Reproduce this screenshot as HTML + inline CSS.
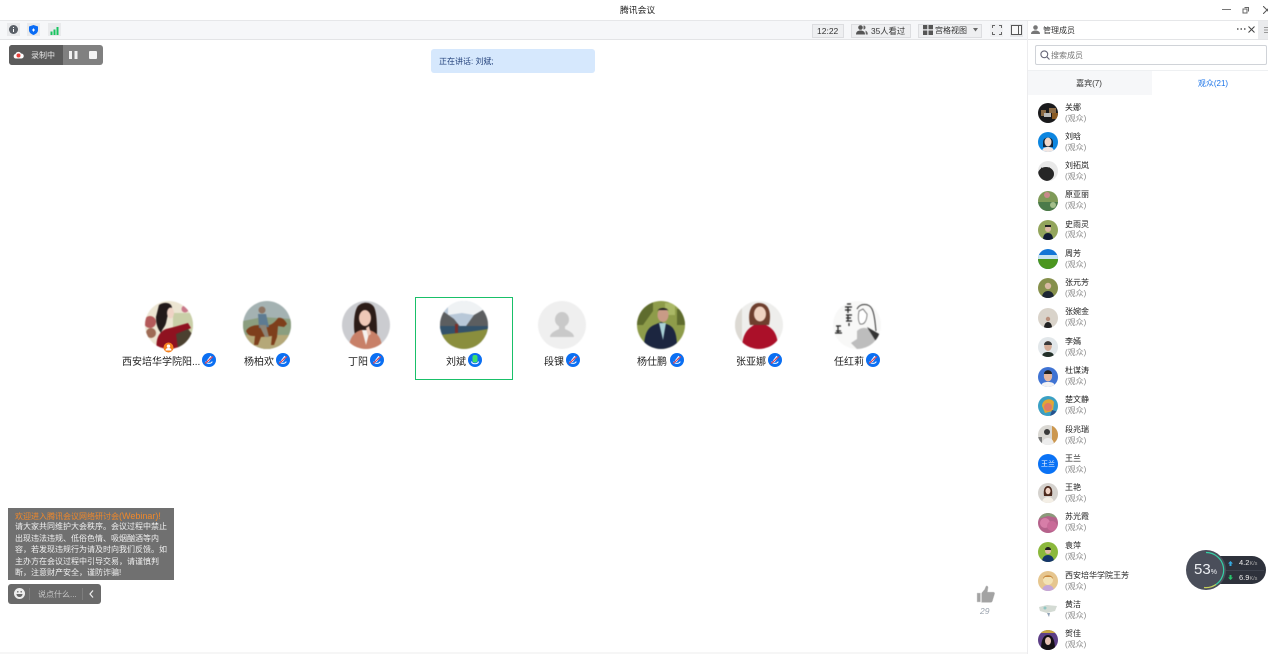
<!DOCTYPE html>
<html lang="zh"><head><meta charset="utf-8"><title>腾讯会议</title>
<style>
html,body{margin:0;padding:0;background:#fff}
#p{position:relative;width:1268px;height:654px;overflow:hidden;background:#fff;font-family:"Liberation Sans","Noto Sans CJK SC",sans-serif;color:#222;filter:blur(.25px)}
#p div,#p svg{position:absolute}
.t{white-space:nowrap;line-height:12px}
.n{font-size:10px;top:357px;color:#222}
.m{width:14px;height:14px;top:353px}
.v{width:48px;height:48px;top:301px;border-radius:50%;filter:blur(.4px)}
.s{width:20px;height:20px;left:1038px;border-radius:50%;filter:blur(.3px)}
.l{left:1065px;font-size:8px;color:#222;white-space:nowrap;line-height:10px;margin-top:.7px}
.r{left:1065px;font-size:8px;color:#888;white-space:nowrap;line-height:10px;margin-top:.7px}
.b{background:#eeeff1;border:1px solid #dcdde0;box-sizing:border-box;height:14px;top:24px}
.c{font-size:8px;color:#f0f0f0;left:15px}
</style></head><body><div id="p">

<div class="t" style="left:620px;top:4px;font-size:8.8px;color:#222">腾讯会议</div>
<div style="left:1222px;top:9px;width:9px;height:1px;background:#777"></div>
<svg style="left:1242px;top:6px" width="8" height="8" viewBox="0 0 8 8"><path d="M2.500 1.500h4v4M1 3h4v4H1z" fill="none" stroke="#666"/></svg>
<svg style="left:1263px;top:6px" width="5" height="8" viewBox="0 0 5 8"><path d="M0 0l8 8M8 0L0 8" stroke="#555" fill="none"/></svg>

<div style="left:0;top:20px;width:1268px;height:20px;background:#f6f7f9;border-top:1px solid #e6e7e9;border-bottom:1px solid #e3e4e6;box-sizing:border-box"></div>
<div style="left:7px;top:23px;width:13px;height:13px;background:#e9eaec"></div>
<svg style="left:9px;top:25px" width="9" height="9" viewBox="0 0 9 9"><circle cx="4.500" cy="4.500" r="4.500" fill="#5a6068"/><path d="M4.500 2v1M4.500 4v3" stroke="#fff"/></svg>
<div style="left:27px;top:23px;width:13px;height:13px;background:#e9eaec"></div>
<svg style="left:29px;top:25px" width="9" height="10" viewBox="0 0 9 10"><path d="M4.500 0L9 1.500V5c0 2.500-2 4-4.500 5C2 9 0 7.500 0 5V1.500z" fill="#0a6cf5"/><path d="M3 5h3M4.500 3.500v3" stroke="#fff"/></svg>
<div style="left:48px;top:23px;width:13px;height:13px;background:#e9eaec"></div>
<svg style="left:50px;top:26px" width="9" height="9" viewBox="0 0 9 9"><path d="M.5 5.500h2V9h-2zM3.500 3.500h2V9h-2zM6.500 1h2v8h-2z" fill="#17c45f"/></svg>

<div class="b" style="left:812px;width:32px"></div>
<div class="t" style="left:817px;top:24.500px;font-size:8.500px;color:#333">12:22</div>
<div class="b" style="left:851px;width:60px"></div>
<svg style="left:856px;top:25px" width="12" height="10" viewBox="0 0 12 10"><circle cx="4.500" cy="2.500" r="2.300" fill="#555"/><path d="M0 9.500c0-3 2-4 4.500-4S9 6.500 9 9.500z" fill="#555"/><path d="M7.500.5a2 2 0 010 4M9.500 5.500c1 .5 2.300 1.500 2.300 4h-2z" fill="#666"/></svg>
<div class="t" style="left:871px;top:24.500px;font-size:8.300px;color:#333">35人看过</div>
<div class="b" style="left:918px;width:64px"></div>
<svg style="left:923px;top:25px" width="10" height="10" viewBox="0 0 10 10"><path d="M0 0h4.300v4.300H0zM5.500 0H10v4.300H5.500zM0 5.500h4.300V10H0zM5.500 5.500H10V10H5.500z" fill="#555"/></svg>
<div class="t" style="left:935px;top:24.500px;font-size:8px;color:#333">宫格视图</div>
<svg style="left:973px;top:28px" width="5" height="4" viewBox="0 0 5 4"><path d="M0 0h5L2.500 3.500z" fill="#666"/></svg>
<div style="left:990px;top:24px;width:13px;height:13px;background:#eff0f2"></div>
<svg style="left:992px;top:25px" width="10" height="10" viewBox="0 0 10 10"><path d="M.5 3V.5H3M7 .5h2.500V3M9.500 7v2.500H7M3 9.500H.5V7" fill="none" stroke="#666"/></svg>
<div style="left:1010px;top:24px;width:13px;height:13px;background:#e6e7e9"></div>
<svg style="left:1011px;top:25px" width="11" height="10" viewBox="0 0 11 10"><rect x=".5" y=".5" width="10" height="9" fill="#f8f8f8" stroke="#555"/><path d="M7.500 1v8" stroke="#555"/></svg>

<div style="left:1027px;top:21px;width:241px;height:18px;background:#fff"></div>
<div style="left:1027px;top:21px;width:1px;height:633px;background:#ececee"></div>
<svg style="left:1031px;top:25px" width="9" height="9" viewBox="0 0 9 9"><circle cx="4.500" cy="2.500" r="2.300" fill="#777"/><path d="M0 9c0-2.500 2-3.500 4.500-3.500S9 6.500 9 9z" fill="#777"/></svg>
<div class="t" style="left:1043px;top:24.500px;font-size:8px;color:#333">管理成员</div>
<svg style="left:1237px;top:28px" width="9" height="3" viewBox="0 0 9 3"><path d="M0 .3h1.500v1.500H0zM3.500 .3H5v1.500H3.500zM7 .3h1.500v1.500H7z" fill="#555"/></svg>
<svg style="left:1248px;top:26px" width="7" height="7" viewBox="0 0 7 7"><path d="M.5.500l6 6M6.500.500l-6 6" stroke="#444" fill="none"/></svg>
<div style="left:1258px;top:21px;width:10px;height:18px;background:#eaebed"></div>
<svg style="left:1264px;top:27px" width="4" height="6" viewBox="0 0 4 6"><path d="M0 .5h4M0 3h4M0 5.500h4" stroke="#999"/></svg>

<div style="left:1035px;top:45px;width:232px;height:20px;border:1px solid #d0d3d8;border-radius:2px;box-sizing:border-box;background:#fff"></div>
<svg style="left:1040px;top:50px" width="10" height="10" viewBox="0 0 10 10"><circle cx="4.300" cy="4.300" r="3.400" fill="none" stroke="#667" stroke-width="1.100"/><path d="M7 7l2.500 2.500" stroke="#667" stroke-width="1.100"/></svg>
<div class="t" style="left:1051px;top:50px;font-size:8px;color:#777">搜索成员</div>
<div style="left:1028px;top:70px;width:240px;height:1px;background:#eef0f2"></div>
<div style="left:1028px;top:71px;width:124px;height:24px;background:#f6f7f9"></div>
<div class="t" style="left:1028px;width:122px;text-align:center;top:77.500px;font-size:8px;color:#333">嘉宾(7)</div>
<div class="t" style="left:1152px;width:122px;text-align:center;top:77.500px;font-size:8px;color:#1a73e8">观众(21)</div>

<!-- recording -->
<div style="left:9px;top:45px;width:94px;height:20px;background:#808080;border-radius:3px"></div>
<div style="left:9px;top:45px;width:54px;height:20px;background:#5b5b5b;border-radius:3px 0 0 3px"></div>
<svg style="left:13px;top:51px" width="11" height="8" viewBox="0 0 11 8"><path d="M2.500 7.500a2.300 2.300 0 010-4.500 3 3 0 015.500-.5 2.500 2.500 0 01.500 5z" fill="#fff"/><circle cx="5.500" cy="4.500" r="2" fill="#e9403c"/></svg>
<div class="t" style="left:31px;top:50px;font-size:8px;color:#e6e6e6">录制中</div>
<svg style="left:69px;top:51px" width="9" height="8" viewBox="0 0 9 8"><path d="M0 0h3v8H0zM5.500 0h3v8h-3z" fill="#f1f1f1"/></svg>
<div style="left:89px;top:51px;width:8px;height:8px;background:#f4f4f4;border-radius:1px"></div>

<!-- speaking -->
<div style="left:431px;top:49px;width:164px;height:24px;background:#d6e8fd;border-radius:3px"></div>
<div class="t" style="left:439px;top:56px;font-size:8px;color:#24427c">正在讲话: 刘斌;</div>

<!-- avatars -->
<svg class="v" style="left:145px" viewBox="0 0 48 48"><rect width="48" height="48" fill="#ece5d2"/><rect x="28" y="12" width="20" height="20" fill="#c9cfa8"/><circle cx="5" cy="21" r="6" fill="#b45a5a"/><circle cx="6" cy="32" r="5" fill="#9e6b55"/><circle cx="40" cy="8" r="3.500" fill="#c9788a"/><path d="M12 48c-2-10 3-18 9-20l8-2 14-4 3 5-12 6 1 15z" fill="#8f1220"/><path d="M14 4c6-4 13-2 13 3l-4 6-2 9c-1 4-4 6-5 10-3-4-5-8-5-16z" fill="#221a1a"/><ellipse cx="25.500" cy="12" rx="3.500" ry="5.500" fill="#efd3c5"/><path d="M31 33l12-5 5 6-4 14H33z" fill="#4b4030"/></svg>
<svg style="left:163px;top:342px" width="11" height="11" viewBox="0 0 11 11"><circle cx="5.500" cy="5.500" r="5" fill="#f5811f"/><circle cx="5.500" cy="4.200" r="1.700" fill="#fff"/><path d="M2.500 8.500c0-2 1.500-2.500 3-2.500s3 .5 3 2.500z" fill="#fff"/></svg>
<svg class="v" style="left:243px" viewBox="0 0 48 48"><rect width="48" height="48" fill="#a4b2b2"/><path d="M0 20l20-4 28 2v30H0z" fill="#8b9e7f"/><path d="M0 34h48v14H0z" fill="#b5a878"/><path d="M3 30c3-6 12-7 20-5 6-1 9-4 12-8 4-1 7 2 9 6l-3 3-6-1-1 11-3 8h-3l1-9-11 1-3 8H11l1-9c-4 0-7 0-9-5z" fill="#7e3f1c"/><path d="M15 13h8l3 13-10 1z" fill="#5d7b92"/><circle cx="19" cy="9" r="3.500" fill="#8d7463"/><path d="M16 24h7l3 12h-4z" fill="#8d8577"/></svg>
<svg class="v" style="left:342px" viewBox="0 0 48 48"><rect width="48" height="48" fill="#cbccd0"/><path d="M13 34c-2-9-1-24 3-29 5-5 13-4 16 1 3 6 3 20 3 28z" fill="#2c1c17"/><ellipse cx="23" cy="17" rx="6" ry="8" fill="#eec8b7"/><path d="M7 48c0-11 5-17 12-19l4 0 4 0c8 2 13 8 13 19z" fill="#c88068"/><path d="M20 29l4 15 4-15z" fill="#f5f1ee"/><path d="M24 27l3-2 2 8-3 2z" fill="#eec8b7"/></svg>
<div style="left:415px;top:297px;width:98px;height:83px;border:1px solid #19c069;box-sizing:border-box"></div>
<svg class="v" style="left:440px" viewBox="0 0 48 48"><rect width="48" height="48" fill="#b8c8d8"/><path d="M8 0h30l10 8-14 6-12-2-14 2z" fill="#eff2f4"/><path d="M0 8l14 10 8 10H0zM48 6L34 14l-10 14h24z" fill="#5c5e60"/><rect y="25" width="48" height="9" fill="#33526a"/><path d="M0 34c16-2 32-3 48-6v20H0z" fill="#8a8e3d"/><rect x="15" y="23" width="3" height="9" fill="#7a2f2a"/></svg>
<svg class="v" style="left:538px" viewBox="0 0 48 48"><rect width="48" height="48" fill="#efefef"/><ellipse cx="24" cy="18.500" rx="7" ry="7.500" fill="#c9c9c9"/><path d="M12 36c0-4 5-6 9-8v-3h6v3c4 2 9 4 9 8z" fill="#c9c9c9"/></svg>
<svg class="v" style="left:637px" viewBox="0 0 48 48"><rect width="48" height="48" fill="#8e9c4a"/><path d="M0 0h16v10L6 24H0zM40 8h8v16h-8z" fill="#5f6c2e"/><path d="M28 2h10v12H28z" fill="#aab866"/><path d="M7 48c0-14 3-21 10-24l7-3 8 3c6 3 8 10 8 24z" fill="#1c2640"/><path d="M22 22h7l-3 17z" fill="#a9d1d6"/><ellipse cx="26" cy="14" rx="5.500" ry="7" fill="#c99b86"/><path d="M20.500 10c1-4 10-4 11 0l-1-1h-9z" fill="#222"/></svg>
<svg class="v" style="left:735px" viewBox="0 0 48 48"><rect width="48" height="48" fill="#eeeeec"/><rect width="7" height="48" fill="#dcd9d3"/><path d="M15 24C12 10 17 2 24 2c9 0 13 8 10 22z" fill="#6f3f2e"/><ellipse cx="25" cy="13" rx="6" ry="7.500" fill="#efd2c0"/><path d="M7 48c0-14 5-20 12-24h12c8 4 12 10 12 24z" fill="#ab1029"/></svg>
<svg class="v" style="left:833px" viewBox="0 0 48 48"><rect width="48" height="48" fill="#f8f8f7"/><path d="M24 8c3-6 12-6 15 0 3 6 3 14 4 22" fill="none" stroke="#333"/><path d="M26 10c-1 5-1 10 1 13 4 1 7-3 7-10l-4-5z" fill="#fff" stroke="#555" stroke-width=".7"/><path d="M24 30c4-4 9-4 13-1l9 6 2 8-12 5H24l-6-6 6-4z" fill="#bdbdbd"/><path d="M34 26l14 8-4 8z" fill="#333"/><path d="M14 3h4M12 6h7M15 6v6M12 9h6M13 14h6M13 17h5M15 14v6M13 20h6M16 22v3M3 25h5M3 30h5M5 25v7M2 32h7" stroke="#222" stroke-width="1.200"/></svg>

<div class="t n" style="left:122px">西安培华学院阳...</div>
<div class="t n" style="left:244px">杨柏欢</div>
<div class="t n" style="left:348px">丁阳</div>
<div class="t n" style="left:446px">刘斌</div>
<div class="t n" style="left:544px">段锞</div>
<div class="t n" style="left:637px">杨仕鹏</div>
<div class="t n" style="left:736px">张亚娜</div>
<div class="t n" style="left:834px">任红莉</div>

<svg class="m" style="left:202px" viewBox="0 0 14 14"><circle cx="7" cy="7" r="7" fill="#0b6ff2"/><path d="M3.800 8.500c.7 2.500 5.700 2.500 6.400 0M5.500 7.500l3-4 1 1-3 4z" fill="none" stroke="#fff"/><path d="M3 10.500l8-7" stroke="#e83a4b" stroke-width="1.100"/></svg>
<svg class="m" style="left:276px" viewBox="0 0 14 14"><circle cx="7" cy="7" r="7" fill="#0b6ff2"/><path d="M3.800 8.500c.7 2.500 5.700 2.500 6.400 0M5.500 7.500l3-4 1 1-3 4z" fill="none" stroke="#fff"/><path d="M3 10.500l8-7" stroke="#e83a4b" stroke-width="1.100"/></svg>
<svg class="m" style="left:370px" viewBox="0 0 14 14"><circle cx="7" cy="7" r="7" fill="#0b6ff2"/><path d="M3.800 8.500c.7 2.500 5.700 2.500 6.400 0M5.500 7.500l3-4 1 1-3 4z" fill="none" stroke="#fff"/><path d="M3 10.500l8-7" stroke="#e83a4b" stroke-width="1.100"/></svg>
<svg class="m" style="left:468px" viewBox="0 0 14 14"><circle cx="7" cy="7" r="7" fill="#0b6ff2"/><rect x="4.500" y="2" width="5" height="7.500" rx="2" fill="#3fe06a"/><path d="M3.500 8.500c.5 3 6.500 3 7 0" fill="none" stroke="#fff"/></svg>
<svg class="m" style="left:566px" viewBox="0 0 14 14"><circle cx="7" cy="7" r="7" fill="#0b6ff2"/><path d="M3.800 8.500c.7 2.500 5.700 2.500 6.400 0M5.500 7.500l3-4 1 1-3 4z" fill="none" stroke="#fff"/><path d="M3 10.500l8-7" stroke="#e83a4b" stroke-width="1.100"/></svg>
<svg class="m" style="left:670px" viewBox="0 0 14 14"><circle cx="7" cy="7" r="7" fill="#0b6ff2"/><path d="M3.800 8.500c.7 2.500 5.700 2.500 6.400 0M5.500 7.500l3-4 1 1-3 4z" fill="none" stroke="#fff"/><path d="M3 10.500l8-7" stroke="#e83a4b" stroke-width="1.100"/></svg>
<svg class="m" style="left:768px" viewBox="0 0 14 14"><circle cx="7" cy="7" r="7" fill="#0b6ff2"/><path d="M3.800 8.500c.7 2.500 5.700 2.500 6.400 0M5.500 7.500l3-4 1 1-3 4z" fill="none" stroke="#fff"/><path d="M3 10.500l8-7" stroke="#e83a4b" stroke-width="1.100"/></svg>
<svg class="m" style="left:866px" viewBox="0 0 14 14"><circle cx="7" cy="7" r="7" fill="#0b6ff2"/><path d="M3.800 8.500c.7 2.500 5.700 2.500 6.400 0M5.500 7.500l3-4 1 1-3 4z" fill="none" stroke="#fff"/><path d="M3 10.500l8-7" stroke="#e83a4b" stroke-width="1.100"/></svg>

<!-- chat -->
<div style="left:8px;top:508px;width:166px;height:72px;background:#707070"></div>
<div class="t" style="left:15px;top:510px;font-size:8px;color:#f0882a">欢迎进入腾讯会议网络研讨会<span style="font-size:9px">(Webinar)!</span></div>
<div class="t c" style="top:521px">请大家共同维护大会秩序。会议过程中禁止</div>
<div class="t c" style="top:533px">出现违法违规、低俗色情、吸烟酗酒等内</div>
<div class="t c" style="top:544px">容，若发现违规行为请及时向我们反馈。如</div>
<div class="t c" style="top:556px">主办方在会议过程中引导交易，请谨慎判</div>
<div class="t c" style="top:567px">断，注意财产安全，谨防诈骗!</div>
<div style="left:8px;top:584px;width:93px;height:20px;background:#6a6a6a;border-radius:3px"></div>
<svg style="left:14px;top:588px" width="11" height="11" viewBox="0 0 11 11"><circle cx="5.500" cy="5.500" r="5.500" fill="#eee"/><path d="M2.500 6h6c0 2-1.500 3-3 3s-3-1-3-3z" fill="#6a6a6a"/><circle cx="3.800" cy="3.800" r=".8" fill="#6a6a6a"/><circle cx="7.200" cy="3.800" r=".8" fill="#6a6a6a"/></svg>
<div style="left:29px;top:588px;width:1px;height:12px;background:#7d7d7d"></div>
<div class="t" style="left:38px;top:589px;font-size:8px;color:#c8c8c8">说点什么...</div>
<div style="left:82px;top:588px;width:1px;height:12px;background:#7d7d7d"></div>
<svg style="left:89px;top:590px" width="5" height="8" viewBox="0 0 5 8"><path d="M4 .5L1 4l3 3.500" fill="none" stroke="#eee" stroke-width="1.200"/></svg>

<!-- like -->
<svg style="left:976px;top:585px" width="19" height="18" viewBox="0 0 19 18"><path d="M1 8h3.500v9H1zM5.500 8l3-3.500L10 1c1.500-.5 2.500.5 2 2.500L11.500 7H17c1.500 0 2 1 1.500 2.500l-2 6.500c-.3 1-1 1.500-2 1.500H5.500z" fill="#a3a3a3" stroke="#d8d8d8" stroke-width=".5"/></svg>
<div class="t" style="left:980px;top:605px;font-size:8.500px;font-style:italic;color:#9aa2ad">29</div>

<!-- members -->
<svg class="s" style="top:103px" viewBox="0 0 20 20"><rect width="20" height="20" fill="#1a1a1c"/><path d="M3 7h5v6H3zM11 5h7v5h-7z" fill="#8a6a45"/><rect x="6" y="10" width="7" height="4" fill="#bbb"/><rect x="14" y="10" width="6" height="6" fill="#8a5a22"/></svg>
<svg class="s" style="top:132px" viewBox="0 0 20 20"><rect width="20" height="20" fill="#0d86e0"/><path d="M5 10c0-6 10-6 10 0v5H5z" fill="#12243a"/><ellipse cx="10" cy="10" rx="3.500" ry="4.500" fill="#f1d7c9"/><path d="M4 20c0-4 3-5 6-5s6 1 6 5z" fill="#f2e7e3"/></svg>
<svg class="s" style="top:161px" viewBox="0 0 20 20"><rect width="20" height="20" fill="#e8e8e8"/><ellipse cx="8" cy="13" rx="8" ry="7" fill="#262626"/><path d="M3 6l2 3h5l2-3v6H3z" fill="#262626"/></svg>
<svg class="s" style="top:191px" viewBox="0 0 20 20"><rect width="20" height="20" fill="#7f9a58"/><circle cx="9" cy="4" r="3" fill="#c98a8a"/><rect y="11" width="20" height="9" fill="#4b7a4a"/><circle cx="15" cy="14" r="3" fill="#a4bf8b"/></svg>
<svg class="s" style="top:220px" viewBox="0 0 20 20"><rect width="20" height="20" fill="#93a55c"/><path d="M5 20c0-5 2-7 5-7s5 2 5 7z" fill="#111c33"/><circle cx="10" cy="9" r="3" fill="#dcb9a3"/><path d="M7 7h6V5H7z" fill="#222"/></svg>
<svg class="s" style="top:249px" viewBox="0 0 20 20"><rect width="20" height="20" fill="#1376d6"/><rect y="6" width="20" height="4" fill="#c8e4f2"/><rect y="10" width="20" height="10" fill="#4b961f"/></svg>
<svg class="s" style="top:278px" viewBox="0 0 20 20"><rect width="20" height="20" fill="#86904c"/><path d="M4 20c0-5 3-7 6-7s6 2 6 7z" fill="#1d2633"/><circle cx="10" cy="8" r="3.200" fill="#d9b9a2"/></svg>
<svg class="s" style="top:307.500px" viewBox="0 0 20 20"><rect width="20" height="20" fill="#d9d3ca"/><path d="M6 20c0-4 2-6 4-6s4 2 4 6z" fill="#222"/><circle cx="10" cy="11" r="2.200" fill="#b98f7b"/></svg>
<svg class="s" style="top:337px" viewBox="0 0 20 20"><rect width="20" height="20" fill="#e2e7ea"/><path d="M4 20c0-4 3-5 6-5s6 1 6 5z" fill="#233029"/><ellipse cx="10" cy="9" rx="3.800" ry="5" fill="#d5ac96"/><path d="M6 8c0-5 8-5 8 0z" fill="#3a3a3a"/></svg>
<svg class="s" style="top:366.500px" viewBox="0 0 20 20"><rect width="20" height="20" fill="#3f73d3"/><path d="M3 20c0-4 3-5 7-5s7 1 7 5z" fill="#f2f2f4"/><ellipse cx="10" cy="9" rx="4.200" ry="5.500" fill="#e4b8a0"/><path d="M6 7c0-5 8-5 8 0z" fill="#222"/></svg>
<svg class="s" style="top:395.500px" viewBox="0 0 20 20"><rect width="20" height="20" fill="#3aa0c4"/><path d="M4 10C4 3 13 1 16 6l-1 9-8 2z" fill="#e0a636"/><circle cx="10" cy="11" r="4" fill="#df7a66"/><path d="M1 15l6 5H0zM14 14l6 2v4h-8z" fill="#27538f"/></svg>
<svg class="s" style="top:425px" viewBox="0 0 20 20"><rect width="20" height="20" fill="#dad8d3"/><rect x="14" width="6" height="20" fill="#cc974e"/><path d="M4 20c0-5 3-7 6-7s6 2 6 7z" fill="#ededed"/><circle cx="9" cy="7" r="3" fill="#3a3a3a"/><rect y="12" width="4" height="8" fill="#777"/></svg>
<div class="s" style="top:454px;background:#0a72f5"></div>
<div class="t" style="left:1041px;top:458.500px;font-size:7px;color:#fff;line-height:11px">王兰</div>
<svg class="s" style="top:483px" viewBox="0 0 20 20"><rect width="20" height="20" fill="#d5d2ce"/><path d="M6 13C5 6 7 3 10 3s5 3 4 10z" fill="#4c2a1e"/><ellipse cx="10" cy="8" rx="2.500" ry="3.200" fill="#f0d4c6"/><path d="M4 20c0-4 3-6 6-6s6 2 6 6z" fill="#f4efe6"/></svg>
<svg class="s" style="top:512.500px" viewBox="0 0 20 20"><rect width="20" height="20" fill="#b5628b"/><circle cx="7" cy="10" r="5" fill="#d77ea8"/><circle cx="14" cy="13" r="5" fill="#c96a98"/><path d="M0 0h20v5L10 3 0 6z" fill="#8a9a7a"/></svg>
<svg class="s" style="top:541.500px" viewBox="0 0 20 20"><rect width="20" height="20" fill="#8bb83c"/><path d="M4 20c0-5 3-7 6-7s6 2 6 7z" fill="#15366b"/><circle cx="10" cy="9" r="3" fill="#e0bca7"/><path d="M7 8c0-4 6-4 6 0z" fill="#222"/></svg>
<svg class="s" style="top:571px" viewBox="0 0 20 20"><rect width="20" height="20" fill="#e6c68f"/><circle cx="10" cy="9" r="5" fill="#f3e2b4"/><path d="M4 20c0-4 3-6 6-6s6 2 6 6z" fill="#c4a6d8"/><path d="M5 8c0-5 10-5 10 0l-2-2H7z" fill="#c9893c"/></svg>
<svg class="s" style="top:600px" viewBox="0 0 20 20"><rect width="20" height="20" fill="#fff"/><path d="M1 7l8-2 10 1-2 5-8 2-7-2z" fill="#d4dbd4"/><path d="M9 13l3 0-1 4z" fill="#8fa1b5"/><circle cx="7" cy="8" r="1.500" fill="#8fc6c2"/></svg>
<svg class="s" style="top:629.500px" viewBox="0 0 20 20"><rect width="20" height="20" fill="#5d3f86"/><rect width="20" height="3" fill="#c9a640"/><path d="M3 20c0-9 2-15 7-15s7 6 7 15z" fill="#151015"/><ellipse cx="10" cy="11" rx="3" ry="4" fill="#e5c0b2"/></svg>

<div class="t l" style="top:102px">关娜</div><div class="t r" style="top:113px">(观众)</div>
<div class="t l" style="top:131px">刘晗</div><div class="t r" style="top:142px">(观众)</div>
<div class="t l" style="top:160px">刘拓岚</div><div class="t r" style="top:171px">(观众)</div>
<div class="t l" style="top:189.500px">原亚丽</div><div class="t r" style="top:200.500px">(观众)</div>
<div class="t l" style="top:219px">史雨灵</div><div class="t r" style="top:229.500px">(观众)</div>
<div class="t l" style="top:248px">周芳</div><div class="t r" style="top:259px">(观众)</div>
<div class="t l" style="top:277.500px">张元芳</div><div class="t r" style="top:288.500px">(观众)</div>
<div class="t l" style="top:306.500px">张婉金</div><div class="t r" style="top:317.500px">(观众)</div>
<div class="t l" style="top:336px">李嫣</div><div class="t r" style="top:347px">(观众)</div>
<div class="t l" style="top:365px">杜谋涛</div><div class="t r" style="top:376px">(观众)</div>
<div class="t l" style="top:394.500px">楚文静</div><div class="t r" style="top:405.500px">(观众)</div>
<div class="t l" style="top:424px">段兆瑞</div><div class="t r" style="top:435px">(观众)</div>
<div class="t l" style="top:453px">王兰</div><div class="t r" style="top:464px">(观众)</div>
<div class="t l" style="top:482px">王艳</div><div class="t r" style="top:493px">(观众)</div>
<div class="t l" style="top:511.500px">苏光霞</div><div class="t r" style="top:522.500px">(观众)</div>
<div class="t l" style="top:540.500px">袁萍</div><div class="t r" style="top:551.500px">(观众)</div>
<div class="t l" style="top:570px">西安培华学院王芳</div><div class="t r" style="top:581px">(观众)</div>
<div class="t l" style="top:599px">黄洁</div><div class="t r" style="top:610px">(观众)</div>
<div class="t l" style="top:628.500px">贺佳</div><div class="t r" style="top:639.500px">(观众)</div>

<!-- network widget -->
<div style="left:1200px;top:556px;width:66px;height:28px;background:#2e323c;border-radius:14px"></div>
<div style="left:1224px;top:570px;width:40px;height:1px;background:#3d424d"></div>
<svg style="left:1186px;top:550px" width="40" height="40" viewBox="0 0 40 40"><circle cx="20" cy="20" r="20" fill="#4a4e5a"/><path d="M20 2.500a17.500 17.500 0 016 34" fill="none" stroke="#35d0a5" stroke-width="1.200"/><path d="M30 34.500a17.500 17.500 0 01-12 3" fill="none" stroke="#c8cf5a" stroke-width="1.200"/></svg>
<div class="t" style="left:1194px;top:562px;font-size:15px;line-height:16px;color:#eceef2">53<span style="font-size:7px">%</span></div>
<svg style="left:1228px;top:561px" width="5" height="5" viewBox="0 0 5 5"><path d="M2.500 0L5 2.500H3.500V5h-2V2.500H0z" fill="#36a9e0"/></svg>
<svg style="left:1228px;top:575px" width="5" height="5" viewBox="0 0 5 5"><path d="M2.500 5L5 2.500H3.500V0h-2v2.500H0z" fill="#27c46b"/></svg>
<div class="t" style="left:1239px;top:557px;font-size:7.500px;color:#eee">4.2<span style="font-size:5.500px;color:#aaa">K/s</span></div>
<div class="t" style="left:1239px;top:571.500px;font-size:7.500px;color:#eee">6.9<span style="font-size:5.500px;color:#aaa">K/s</span></div>

<div style="left:0;top:652px;width:1027px;height:2px;background:#f6f6f6"></div>
</div></body></html>
